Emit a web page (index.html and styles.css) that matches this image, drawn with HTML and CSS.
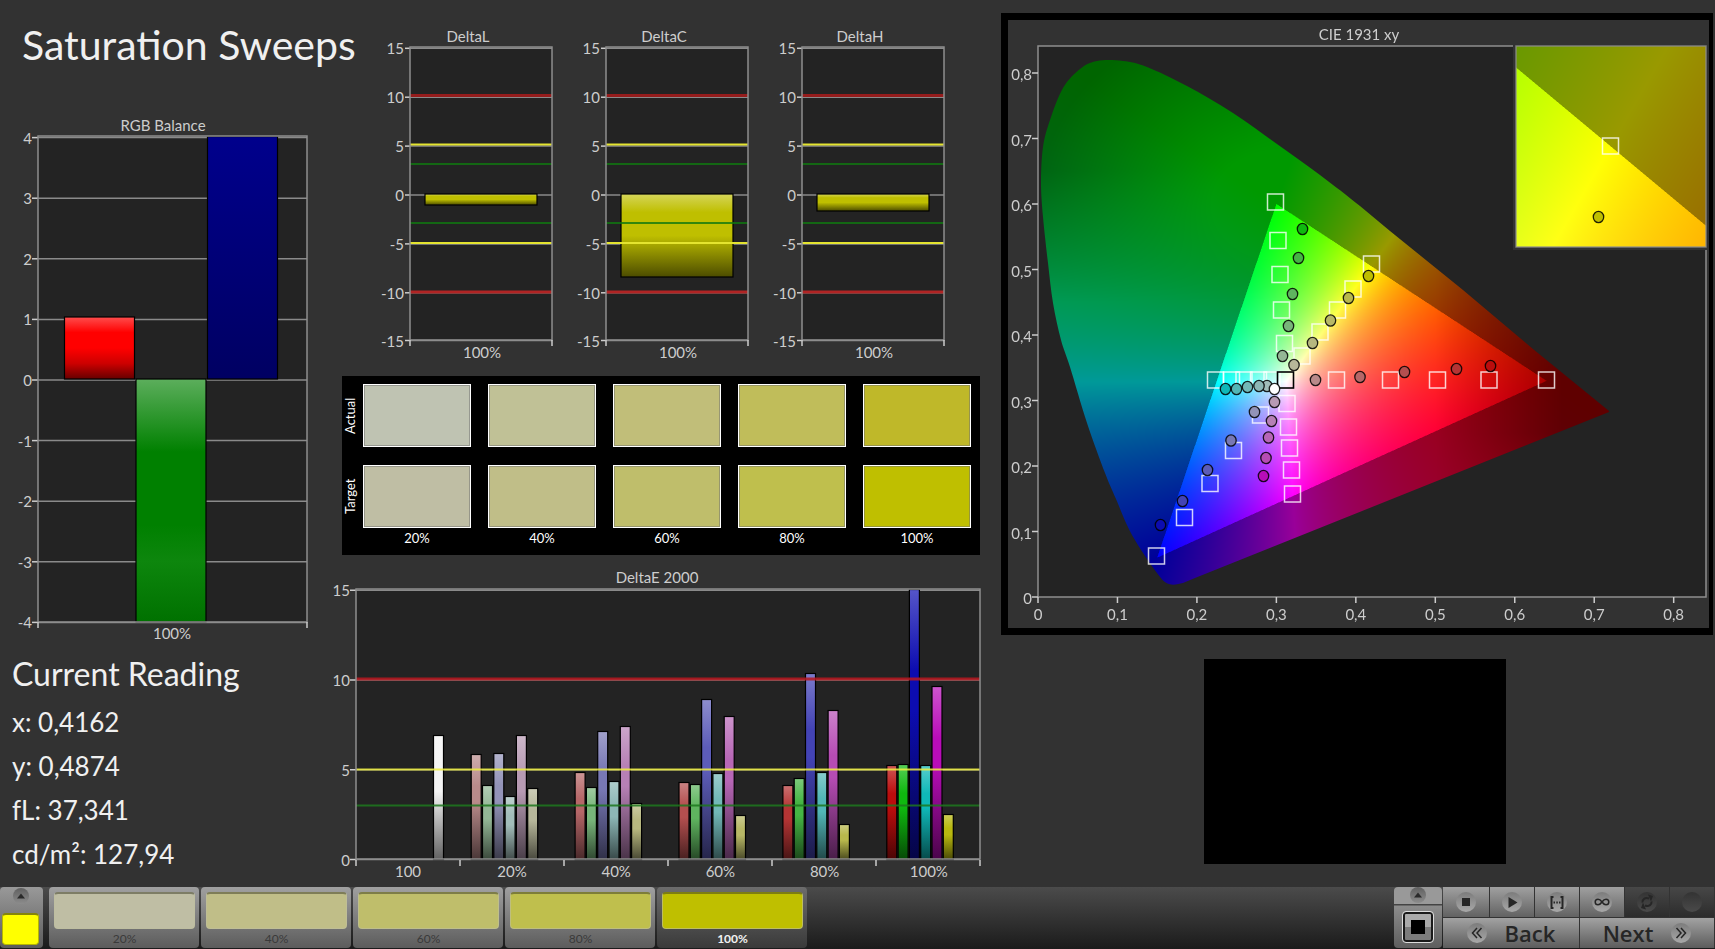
FILE: index.html
```
<!DOCTYPE html>
<html lang="en">
<head>
<meta charset="utf-8">
<title>Saturation Sweeps</title>
<link rel="stylesheet" href="styles.css">
</head>
<body>
<main class="board">
  <section class="col-left">
    <h1 class="title">Saturation Sweeps</h1>
    <svg class="chart" id="rgb" viewBox="0 108 330 540" role="img" aria-label="RGB Balance"></svg>
    <div class="reading">
      <h2 class="reading-title">Current Reading</h2>
      <p class="reading-line">x: 0,4162</p>
      <p class="reading-line">y: 0,4874</p>
      <p class="reading-line">fL: 37,341</p>
      <p class="reading-line">cd/m²: 127,94</p>
    </div>
  </section>

  <section class="col-mid">
    <div class="deltas">
      <svg class="chart" id="deltaL" viewBox="372 20 196 356" role="img" aria-label="DeltaL"></svg>
      <svg class="chart" id="deltaC" viewBox="372 20 196 356" role="img" aria-label="DeltaC"></svg>
      <svg class="chart" id="deltaH" viewBox="372 20 196 356" role="img" aria-label="DeltaH"></svg>
    </div>
    <div class="swatches">
      <span class="side">Actual</span>
      <span class="swatch a20"></span><span class="swatch a40"></span><span class="swatch a60"></span><span class="swatch a80"></span><span class="swatch a100"></span>
      <span class="side">Target</span>
      <span class="swatch t20"></span><span class="swatch t40"></span><span class="swatch t60"></span><span class="swatch t80"></span><span class="swatch t100"></span>
      <span class="under"></span>
      <span class="under">20%</span><span class="under">40%</span><span class="under">60%</span><span class="under">80%</span><span class="under">100%</span>
    </div>
    <svg class="chart" id="deltaE" viewBox="330 554 654 330" role="img" aria-label="DeltaE 2000"></svg>
  </section>

  <section class="col-right">
    <div class="cie-frame">
      <canvas class="cie-layer" id="cieColour" width="701" height="608"></canvas>
      <svg class="cie-layer" id="cie" viewBox="1008 20 701 608" role="img" aria-label="CIE 1931 xy"></svg>
    </div>
    <div class="preview"></div>
  </section>
</main>

<footer class="bar">
  <div class="picker">
    <button class="up" aria-label="Expand"><svg viewBox="0 0 16 16"><path d="M4 10.500 8 5.500l4 5z"/></svg></button>
    <button class="picked" aria-label="Yellow"></button>
  </div>
  <div class="steps">
    <button class="step"><span class="chip t20"></span>20%</button>
    <button class="step"><span class="chip t40"></span>40%</button>
    <button class="step"><span class="chip t60"></span>60%</button>
    <button class="step"><span class="chip t80"></span>80%</button>
    <button class="step current"><span class="chip t100"></span>100%</button>
  </div>
  <div class="window-pick">
    <button class="up" aria-label="Expand"><svg viewBox="0 0 16 16"><path d="M4 10.500 8 5.500l4 5z"/></svg></button>
    <button class="pattern" aria-label="Window pattern"><span class="pattern-dot"></span></button>
  </div>
  <div class="controls">
    <button class="ctl" aria-label="Stop"><svg class="round" viewBox="0 0 20 20"><path d="M6 6h8v8H6z"/></svg></button>
    <button class="ctl" aria-label="Play"><svg class="round" viewBox="0 0 20 20"><path d="M6.500 5 15.500 10.500 6.500 16z"/></svg></button>
    <button class="ctl" aria-label="Range"><svg class="round" viewBox="0 0 20 20"><path class="line" d="M6.500 5H4.500v11h2M13.500 5h2v11h-2M6.500 10.500h1.500M9.300 10.500h1.500M12 10.500h1.500"/></svg></button>
    <button class="ctl" aria-label="Loop"><svg class="round" viewBox="0 0 20 20"><path class="thin" d="M10 10C8.500 7.800 7.300 7.200 6 7.200a2.800 2.800 0 0 0 0 5.600C7.300 12.800 8.500 12.200 10 10s2.700-2.800 4-2.800a2.800 2.800 0 0 1 0 5.600C12.700 12.800 11.500 12.200 10 10z"/></svg></button>
    <button class="ctl off" aria-label="Refresh"><svg class="round" viewBox="0 0 20 20"><path class="line" d="M5.500 10.500C5 7.500 8 5 12 6.500M14.500 9.500c.5 3-2.500 5.500-6.500 4"/><path d="M11 2.500l5 1.500-2 5.500zM9 17.500l-5-1.500 2-5.500z"/></svg></button>
    <button class="ctl off" aria-label="Record"><svg class="round" viewBox="0 0 20 20"></svg></button>
    <button class="nav"><svg class="round" viewBox="0 0 20 20"><path class="thin" d="M10 5 5.500 10l4.500 5M14.500 5 10 10l4.500 5"/></svg>Back</button>
    <button class="nav">Next<svg class="round" viewBox="0 0 20 20"><path class="thin" d="M5.500 5 10 10l-4.500 5M10 5l4.500 5-4.500 5"/></svg></button>
  </div>
</footer>
<script src="charts.js"></script>
</body>
</html>
```
FILE: styles.css
```
* { box-sizing: border-box; }
body {
  margin: 0;
  min-height: 100vh;
  display: flex;
  flex-direction: column;
  background: #323232;
  color: #f0f0f0;
  font-family: Lato, "Open Sans", sans-serif;
}
button { margin: 0; padding: 0; border: 0; font: inherit; color: inherit; cursor: pointer; }
.board {
  flex: 1;
  display: grid;
  grid-template-columns: minmax(0, 330fr) minmax(0, 654fr) minmax(0, 731fr);
  align-items: start;
}
.chart { display: block; width: 100%; height: auto; }

.title {
  margin: 0;
  padding: 20px 0 38px 22px;
  font-size: 41px;
  line-height: 50px;
  font-weight: 400;
  white-space: nowrap;
}
.reading { padding: 4px 12px 0; }
.reading-title { margin: 0 0 4px; font-size: 32px; line-height: 44px; font-weight: 400; }
.reading-line { margin: 0; font-size: 26px; line-height: 44px; }

.deltas {
  display: grid;
  grid-template-columns: repeat(3, minmax(0, 1fr));
  padding: 20px 24px 0 42px;
}
.swatches {
  display: grid;
  grid-template-columns: 4px repeat(5, 1fr);
  grid-template-rows: 63px 63px auto;
  column-gap: 17px;
  row-gap: 18px;
  margin: 0 4px 0 12px;
  padding: 8px 9px 9px 0;
  background: #000;
  color: #fff;
  font-size: 13px;
}
.side { writing-mode: vertical-rl; transform: rotate(180deg); text-align: center; width: 17px; line-height: 17px; }
.swatch { border: 1px solid #fff; box-shadow: inset 0 0 0 1px rgba(110, 110, 110, .5); }
.under { text-align: center; line-height: 16px; margin-top: -16px; }
.a20 { background: #bfc3b2; } .a40 { background: #c0c196; } .a60 { background: #c1be79; }
.a80 { background: #c0bd5a; } .a100 { background: #bfb829; }
.t20 { background: #bfbea4; } .t40 { background: #c0be88; } .t60 { background: #bfbe6b; }
.t80 { background: #bfbf4d; } .t100 { background: #bfbf00; }

.tick-text { font-size: 15px; fill: #cdcdcd; }
.end { text-anchor: end; }
.mid { text-anchor: middle; }
.grid-line { stroke: #8a8a8a; stroke-width: 1.5; }
.tick { stroke: #cdcdcd; stroke-width: 1.5; }
.frame { fill: none; stroke: #8e8e8e; stroke-width: 1.5; }
.plot { fill: #232323; }
.bar-edge { stroke: #000; stroke-width: 1.2; }
.limit { stroke-width: 2; }
.limit.thick { stroke-width: 3; }
.target { fill: none; stroke: #fff; stroke-opacity: .8; stroke-width: 1.5; }
.target.white { stroke: #000; stroke-opacity: 1; stroke-width: 1.6; }
.actual { stroke: #000; stroke-opacity: .85; stroke-width: 1.3; }

.col-right { padding: 13px 2px 0 17px; }
.cie-frame { display: grid; background: #323232; border: 7px solid #000; border-right-width: 4px; }
.cie-layer { grid-area: 1 / 1; display: block; width: 100%; height: auto; }
.preview { width: 302px; height: 205px; margin: 24px 0 0 203px; background: #000; }

.bar {
  display: flex;
  height: 62px;
  background: linear-gradient(#4b4b4b, #1b1b1b);
  font-size: 12px;
}
.picker, .window-pick {
  display: flex;
  flex-direction: column;
  align-items: center;
  border-radius: 4px;
  background: linear-gradient(#999, #5c5c5c);
}
.picker { width: 43px; height: 61px; margin-right: 6px; padding: 1px 2px 0 0; }
.up { width: 16px; height: 16px; border-radius: 8px; background: linear-gradient(#606060, #8c8c8c); }
.up svg { display: block; fill: #2a2a2a; }
.picked { width: 37px; height: 32px; margin-top: 9px; border-radius: 4px; background: #ff0; border: 1px solid #b6b600; border-top: 2px solid #84840a; }
.steps { display: flex; gap: 2px; }
.step {
  display: flex;
  flex-direction: column;
  width: 150px;
  height: 61px;
  padding: 5px 4px 0 5px;
  border-radius: 4px;
  background: linear-gradient(#a0a0a0, #5c5c5c);
  color: #3a3a3a;
  text-align: center;
  line-height: 18px;
}
.chip {
  display: block;
  height: 38px;
  margin-bottom: 1px;
  border-radius: 4px;
  border: 1px solid rgba(190, 190, 160, .6);
  border-top: 2px solid rgba(60, 60, 40, .5);
}
.current { background: linear-gradient(#6c6c6c, #3a3a3a); color: #f2f2f2; font-weight: 700; }
.window-pick { width: 48px; margin-left: auto; margin-right: 1px; height: 61px; background: linear-gradient(#999 0 17px, #444 17px 18px, #8c8c8c 19px, #5e5e5e); }
.pattern {
  display: flex;
  align-items: center;
  justify-content: center;
  width: 32px;
  height: 32px;
  margin-top: 8px;
  border: 1px solid #ddd;
  border-radius: 4px;
  box-shadow: inset 0 0 0 2px #1a1a1a;
  background: linear-gradient(#aaa 50%, #7c7c7c 50%);
}
.pattern-dot { width: 14px; height: 14px; background: #000; }
.controls {
  display: grid;
  grid-template-columns: 46px repeat(5, 44px);
  grid-template-rows: 30px 30px;
  gap: 1px;
  width: 272px;
  height: 61px;
  background: #333;
}
.ctl { display: flex; align-items: center; justify-content: center; background: linear-gradient(#a0a0a0, #626262); }
.ctl.off { background: linear-gradient(#474747, #2c2c2c); }
.off .round { background: linear-gradient(#333, #4a4a4a); }
.round { width: 20px; height: 20px; border-radius: 10px; background: linear-gradient(#7c7c7c, #a8a8a8); fill: #262626; }
.line { fill: none; stroke: #262626; stroke-width: 2; }
.thin { fill: none; stroke: #262626; stroke-width: 1.5; }
.nav {
  grid-column: span 3;
  display: flex;
  align-items: center;
  justify-content: center;
  gap: 18px;
  background: linear-gradient(#a2a2a2, #5c5c5c);
  color: #262626;
  font: 600 22px/30px "Open Sans", sans-serif;
}
```
FILE: charts.js
```
const NS = "http://www.w3.org/2000/svg";
let gradientCount = 0;

function add(parent, name, attrs, text) {
  const el = document.createElementNS(NS, name);
  for (const key in attrs) el.setAttribute(key, attrs[key]);
  if (text !== undefined) el.textContent = text;
  parent.appendChild(el);
  return el;
}
function line(svg, x1, y1, x2, y2, cls, extra) {
  add(svg, "line", Object.assign({ x1, y1, x2, y2, class: cls }, extra));
}
function label(svg, x, y, text, cls) {
  add(svg, "text", { x, y, class: "tick-text " + cls }, text);
}
function plot(svg, x, y, w, h) {
  add(svg, "rect", { x, y, width: w, height: h, class: "plot" });
}
function frame(svg, x, y, w, h) {
  add(svg, "rect", { x, y, width: w, height: h, class: "frame" });
}
function mix(hex, to, amount) {
  const n = parseInt(hex.slice(1), 16);
  const part = s => Math.round(((n >> s) & 255) * (1 - amount) + to * amount);
  return `rgb(${part(16)},${part(8)},${part(0)})`;
}
// Vertical glossy fill: stops are [offset, shade target, amount].
function bar(svg, x, y, w, h, colour, stops) {
  const id = "g" + svg.id + (++gradientCount);
  const g = add(svg, "linearGradient", { id, x1: 0, y1: 0, x2: 0, y2: 1 });
  for (const [offset, to, amount] of stops)
    add(g, "stop", { offset, "stop-color": mix(colour, to, amount) });
  add(svg, "rect", { x, y, width: w, height: h, fill: `url(#${id})`, class: "bar-edge" });
}
const GLOSS = [[0, 255, .35], [.22, 255, 0], [.5, 0, 0], [1, 0, .6]];

function drawRgb() {
  const s = document.getElementById("rgb");
  plot(s, 38, 136, 269, 486);
  for (let v = 4; v >= -4; v--) {
    const y = 380 - v * 60.6;
    line(s, 38, y, 307, y, "grid-line");
    line(s, 32, y, 38, y, "tick");
    label(s, 32, y + 6, v, "end");
  }
  bar(s, 64.5, 317, 70, 62, "#ff0000", [[0, 255, .3], [.25, 255, 0], [.5, 0, 0], [.75, 0, .2], [1, 0, .6]]);
  bar(s, 136, 379, 70, 243, "#008000", [[0, 255, .36], [.3, 255, 0], [.6, 0, 0], [.75, 255, .05], [1, 0, .12]]);
  bar(s, 207.5, 136.5, 70, 242.5, "#00008c", [[0, 0, 0], [1, 0, .3]]);
  frame(s, 38, 136, 269, 486);
  line(s, 38, 622, 38, 628, "tick");
  line(s, 307, 622, 307, 628, "tick");
  label(s, 163, 131, "RGB Balance", "mid");
  label(s, 172, 639, "100%", "mid");
}

function drawDelta(id, depth) {
  const s = document.getElementById(id);
  plot(s, 410, 47, 142, 293);
  for (let v = 15; v >= -15; v -= 5) {
    const y = v === -15 ? 340.5 : 195 - v * 9.78;
    line(s, 410, y, 552, y, "grid-line");
    line(s, 405, y, 410, y, "tick");
    label(s, 404, y + 6, v, "end");
  }
  bar(s, 425, 194, 112, depth, "#bfbf00", GLOSS);
  line(s, 410, 95.5, 552, 95.5, "limit thick", { stroke: "#951c1c" });
  line(s, 410, 292, 552, 292, "limit thick", { stroke: "#b02424" });
  for (const y of [144.5, 243]) line(s, 410, y, 552, y, "limit", { stroke: "#e4e430" });
  for (const y of [164, 223]) line(s, 410, y, 552, y, "limit", { stroke: "#0f780f", "stroke-opacity": .8 });
  frame(s, 410, 47, 142, 293);
  line(s, 410, 340, 410, 346, "tick");
  line(s, 552, 340, 552, 346, "tick");
  label(s, 468, 42, id.replace("delta", "Delta"), "mid");
  label(s, 482, 358, "100%", "mid");
}

function drawDeltaE() {
  const s = document.getElementById("deltaE");
  const groups = [
    ["20%", [753, 784, 752, 795, 734, 787], ["#b98a8a", "#94b796", "#9393b8", "#a2bdba", "#b79ab3", "#b7b79a"]],
    ["40%", [771, 786, 730, 780, 725, 802], ["#b66768", "#78b57a", "#7878b5", "#8db7b6", "#b680b5", "#b7b77f"]],
    ["60%", [781, 783, 698, 772, 715, 814], ["#b44f4f", "#5fb45f", "#5c5cb8", "#72b8b8", "#b766b6", "#b8b866"]],
    ["80%", [784, 777, 672, 771, 709, 823], ["#b53434", "#45b544", "#4343b5", "#52b6b6", "#b64cb4", "#b8b84c"]],
    ["100%", [764, 763, 588, 764, 685, 813], ["#bb0d0d", "#0fb90f", "#0c0cb0", "#0fb8b8", "#b80cb8", "#b8b80f"]]
  ];
  plot(s, 356, 588, 624, 270);
  for (let v = 15; v >= 0; v -= 5) {
    const y = 858.5 - v * 17.95;
    line(s, 356, y, 980, y, "grid-line");
    line(s, 350, y, 356, y, "tick");
    label(s, 350, y + 6, v, "end");
  }
  const stops = [[0, 255, .3], [.3, 255, 0], [.45, 0, 0], [1, 0, .6]];
  const edge = 858;
  bar(s, 433.5, 734.5, 10, edge - 734, "#f4f4f4", stops);
  label(s, 408, 876, "100", "mid");
  groups.forEach(([name, tops, colours], i) => {
    tops.forEach((top, j) =>
      bar(s, 471.2 + i * 103.9 + j * 11.3, top + .5, 10, edge - top, colours[j], stops));
    label(s, 512 + i * 104.2, 876, name, "mid");
  });
  line(s, 356, 678, 980, 678, "limit thick", { stroke: "#b81820", "stroke-opacity": .85 });
  line(s, 356, 768.5, 980, 768.5, "limit", { stroke: "#f0f040", "stroke-opacity": .85 });
  line(s, 356, 804.5, 980, 804.5, "limit", { stroke: "#1d781d", "stroke-opacity": .85 });
  frame(s, 356, 588, 624, 270);
  for (let i = 0; i <= 6; i++) line(s, 356 + i * 104, 859, 356 + i * 104, 865, "tick");
  label(s, 657, 582, "DeltaE 2000", "mid");
}

// Chromaticity diagram --------------------------------------------------
const X0 = 1038, Y0 = 597, SX = 794.6, SY = 655;
const LOCUS = [[1061, 340], [1053, 303], [1048, 263], [1043, 217], [1041, 183], [1043, 147], [1050, 120], [1063, 88],
  [1080, 69], [1097, 61], [1123, 61], [1147, 67], [1187, 86], [1233, 113], [1277, 144], [1320, 175], [1360, 206],
  [1390, 231], [1463, 290], [1533, 349], [1609, 411], [1609, 412], [1195, 578], [1183, 583], [1169, 584],
  [1157, 573], [1132, 535], [1116, 499], [1105, 473], [1087, 423], [1070, 367]];

function side(ax, ay, bx, by, x, y) { return (bx - ax) * (y - ay) - (by - ay) * (x - ax); }
function inGamut(x, y) {
  return side(.15, .06, .64, .33, x, y) > 0 && side(.64, .33, .3, .6, x, y) > 0 && side(.3, .6, .15, .06, x, y) > 0;
}
function unit(v) { return Math.min(1, Math.max(0, v)); }
// Brightness falls off towards the far red and far green ends of the locus.
function falloff(x, y) {
  const red = .38 * unit((x - .5) / .16) * unit((y - .1) / .15);
  const green = .34 * unit((Math.hypot(x - .3, y - .6) - .08) / .22) * unit((y - .45) / .2) * unit((.36 - x) / .1);
  return (1 - red) * (1 - green);
}
function colourAt(x, y) {
  const X = x / y, Z = (1 - x - y) / y;
  const lin = [
    3.2406 * X - 1.5372 - .4986 * Z,
    -.9689 * X + 1.8758 + .0415 * Z,
    .0557 * X - .2040 + 1.0570 * Z
  ].map(v => Math.max(0, v));
  const max = Math.max(...lin);
  const k = (inGamut(x, y) ? 255 : 153) * falloff(x, y);
  return lin.map(v => k * v / max);
}
function paint(w, h, toXy) {
  const c = document.createElement("canvas");
  c.width = w; c.height = h;
  const ctx = c.getContext("2d");
  const img = ctx.createImageData(w, h);
  for (let j = 0; j < h; j++) for (let i = 0; i < w; i++) {
    const rgb = [0, 0, 0];
    for (const d of [.25, .75]) for (const e of [.25, .75]) {
      const [x, y] = toXy(i + d, j + e);
      const part = colourAt(x, Math.max(y, .002));
      for (let n = 0; n < 3; n++) rgb[n] += part[n] / 4;
    }
    img.data.set([rgb[0], rgb[1], rgb[2], 255], (j * w + i) * 4);
  }
  ctx.putImageData(img, 0, 0);
  return c;
}
function drawColour() {
  const ctx = document.getElementById("cieColour").getContext("2d");
  ctx.translate(-1008, -20);
  ctx.fillStyle = "#232323";
  ctx.fillRect(1038, 46, 668, 551);
  const field = paint(580, 540, (i, j) => [(1035 + i - X0) / SX, (Y0 - 55 - j) / SY]);
  ctx.save();
  ctx.beginPath();
  const n = LOCUS.length;
  ctx.moveTo(...LOCUS[0]);
  for (let i = 0; i < n; i++) {
    const [p, a, b, q] = [LOCUS[(i + n - 1) % n], LOCUS[i], LOCUS[(i + 1) % n], LOCUS[(i + 2) % n]];
    // The right-hand part of the outline is straight.
    if ([p, a, b, q].some(point => point[0] > 1400)) { ctx.lineTo(...b); continue; }
    ctx.bezierCurveTo(a[0] + (b[0] - p[0]) / 6, a[1] + (b[1] - p[1]) / 6,
      b[0] - (q[0] - a[0]) / 6, b[1] - (q[1] - a[1]) / 6, b[0], b[1]);
  }
  ctx.clip();
  ctx.drawImage(field, 1035, 55);
  ctx.restore();
  ctx.fillStyle = "#323232";
  ctx.fillRect(1513, 44, 196, 206);
  const zoomed = paint(190, 201, (i, j) => [.4193 + (i - 94.5) / 3780, .5053 - (j - 100) / 3966]);
  ctx.drawImage(zoomed, 1516, 46);
}

function drawCie() {
  const s = document.getElementById("cie");
  add(s, "path", { d: "M1513 46H1038V597H1706V250", class: "frame" });
  add(s, "rect", { x: 1516, y: 46, width: 190, height: 201, class: "frame", "stroke-opacity": .8 });
  for (let i = 0; i <= 8; i++) {
    const name = i ? "0," + i : "0";
    const x = X0 + i * SX / 10, y = Y0 - i * SY / 10;
    line(s, x, 597, x, 603, "tick");
    line(s, 1032, y, 1038, y, "tick");
    label(s, x, 620, name, "mid");
    label(s, 1032, y + 7, name, "end");
  }
  label(s, 1359, 40, "CIE 1931 xy", "mid");
  const squares = [[1275.5, 202], [1278, 240.5], [1280, 274.5], [1281.5, 310], [1284.5, 343.5],
    [1371.5, 264], [1353, 289], [1337.5, 310], [1320, 332], [1302, 356],
    [1215.5, 380], [1231.5, 380], [1244, 380], [1258.5, 380], [1272, 380],
    [1287, 403.5], [1288.5, 427], [1289.5, 448], [1291.5, 470], [1292.5, 494],
    [1260.5, 415], [1233.5, 450.5], [1210, 483.5], [1184.5, 517.5], [1156.5, 556],
    [1336.5, 380], [1390.5, 380], [1437.5, 380], [1489, 380], [1546.5, 380], [1610.5, 146]];
  for (const [x, y] of squares) add(s, "rect", { x: x - 8, y: y - 8, width: 16, height: 16, class: "target" });
  add(s, "rect", { x: 1277.5, y: 372, width: 16, height: 16, class: "target white" });
  const circles = [
    [1302.5, 229, "#0fb90f"], [1298.5, 258, "#45b544"], [1292.5, 294, "#5fb45f"], [1288.5, 326, "#78b57a"], [1282.5, 356, "#94b796"],
    [1368.5, 276, "#bfbf00"], [1348.5, 298, "#b8b84c"], [1330.5, 320.5, "#b8b866"], [1312.5, 343, "#b7b77f"], [1294, 365, "#b7b79a"],
    [1267, 386, "#a2bdba"], [1259, 386, "#8db7b6"], [1247.5, 387, "#72b8b8"], [1236.5, 389, "#52b6b6"], [1225.5, 389, "#0fb8b8"],
    [1315.5, 380, "#b98a8a"], [1360, 377, "#b66768"], [1404.5, 372, "#b44f4f"], [1456.5, 369, "#b53434"], [1490.5, 366, "#bb0d0d"],
    [1274.5, 402, "#b79ab3"], [1271.5, 421, "#b680b5"], [1268.5, 437.5, "#b766b6"], [1266, 458, "#b64cb4"], [1263.5, 476, "#b80cb8"],
    [1254.5, 412, "#9393b8"], [1231, 440.5, "#7878b5"], [1207.5, 470, "#5c5cb8"], [1182.5, 501, "#4343b5"], [1160.5, 525, "#0c0cb0"],
    [1274.5, 389, "#ffffff"], [1598.5, 217, "#bfbf00"]];
  for (const [cx, cy, fill] of circles) add(s, "ellipse", { cx, cy, rx: 5.2, ry: 5.6, fill, class: "actual" });
}

drawRgb();
drawDelta("deltaL", 11);
drawDelta("deltaC", 83);
drawDelta("deltaH", 17);
drawDeltaE();
drawColour();
drawCie();
```
